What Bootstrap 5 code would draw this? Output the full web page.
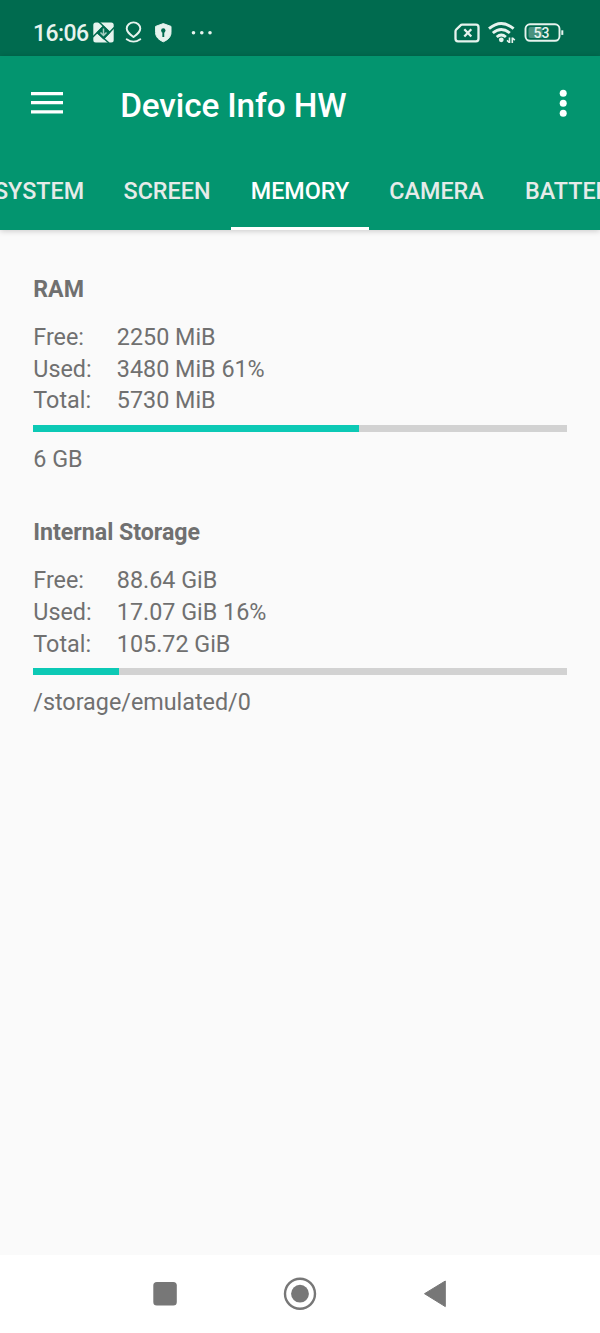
<!DOCTYPE html>
<html lang="en">
<head>
<meta charset="utf-8">
<meta name="viewport" content="width=device-width, initial-scale=1">
<title>Device Info HW</title>
<link href="https://cdn.jsdelivr.net/npm/bootstrap@5.3.0/dist/css/bootstrap.min.css" rel="stylesheet">
<style>
body { font-family: Roboto, sans-serif; font-size: 23.33px; line-height: 31.67px; background: #fafafa; color: #707070; height: 1333px; }
svg { display: block; flex: none; }
.status { background: #006b4f; height: 56px; padding: 9px 35px 0 33px; color: #e6f3ee; }
.clock { font-size: 23px; font-weight: 500; width: 60px; letter-spacing: -.55px; margin-top: 9px; }
.appbar { background: #03956f; height: 174px; box-shadow: 0 1px 6px rgba(0,0,0,.2); color: #fff; }
.toolbar-row { height: 94px; padding: 0 31px; }
.app-title { font-size: 33.33px; font-weight: 500; line-height: 40px; letter-spacing: -.12px; margin: 6px 0 0 57.2px; }
.tabs { height: 80px; }
.tabs .nav-link { height: 80px; padding: 26px 0 0; text-align: center; color: #e6ebe9; font-weight: 500; border-radius: 0; border-bottom: 3.5px solid transparent; flex: none; white-space: nowrap; }
.tabs .nav-link.active { color: #fff; border-color: #fff; }
.tab-system { width: 128px; margin-left: -25px; }
.tab-screen { width: 128px; }
.tab-memory { width: 138px; }
.tab-camera { width: 135px; }
.tab-battery { width: 141px; }
.content { padding: 43.7px 33.3px 0; }
.block { height: 243.4px; }
.block h2 { font-size: 23.2px; font-weight: 700; line-height: 31.67px; letter-spacing: -.03px; margin: 0 0 16.6px; }
.stat-label { width: 83.5px; }
.progress { height: 6.7px; border-radius: 0; background: #d2d2d2; margin: 8.1px 0 11.8px; }
.progress-bar { background: #0cc9b5; }
.navkeys { height: 78px; background: #fff; }
</style>
</head>
<body class="d-flex flex-column overflow-hidden">
<header class="status d-flex align-items-start flex-shrink-0">
  <div class="clock">16:06</div>
  <svg width="124" height="32" viewBox="93 17 124 32" style="margin-top:8px" fill="none">
    <rect x="93.3" y="22.5" width="20.4" height="20" rx="2.5" fill="#e6f3ee"/>
    <path d="M103.500 25.500l7 7-7 7-7-7z" fill="#006b4f"/>
    <path d="M98.500 21.500L110 32.500M114.200 27.500L103.500 38.700M109 43L97 32.500M92.800 37L103.500 26.300" stroke="#006b4f" stroke-width="1.600"/>
    <path d="M103.500 28.500v7m-3-3l3 3 3-3" stroke="#a6cfc2" stroke-width="1.500"/>
    <path d="M133.500 37c-4-3-6.800-5-6.800-8.400a6.800 6.200 0 0 1 13.600 0c0 3.400-2.800 5.400-6.800 8.400z" stroke="#e6f3ee" stroke-width="1.900" stroke-linejoin="round"/>
    <path d="M126.700 39.200q6.800 4.800 13.600 0" stroke="#e6f3ee" stroke-width="1.900" stroke-linecap="round"/>
    <path d="M163.300 23.600l7.700 2.800v6c0 4.500-2.900 7.200-7.700 9.400-4.800-2.200-7.700-4.900-7.700-9.400v-6z" fill="#e6f3ee" stroke="#e6f3ee" stroke-linejoin="round"/>
    <circle cx="163.300" cy="30.500" r="2.200" fill="#006b4f"/><path d="M163.300 31v6" stroke="#006b4f" stroke-width="1.900"/>
    <g fill="#e6f3ee"><circle cx="193.500" cy="32.700" r="1.800"/><circle cx="201.800" cy="32.700" r="1.800"/><circle cx="210" cy="32.700" r="1.800"/></g>
  </svg>
  <svg class="ms-auto" width="111" height="26" viewBox="454 20 111 26" style="margin-top:11px" fill="none" stroke="#e6f3ee">
    <path d="M462.200 24.700h13.800q2.500 0 2.500 2.500v11.600q0 2.500-2.500 2.500h-18q-2.500 0-2.500-2.500v-7.300q0-1.200.8-2l4-3.900q.8-.9 1.900-.9z" stroke-width="2.300"/>
    <path d="M464.300 29.300l7 7.200m0-7.200l-7 7.200" stroke-width="2.300"/>
    <path d="M489 28.700q12.300-10.400 24.600 0M492.800 33q8.500-7.200 17 0M496.700 37q4.600-3.800 9.200 0" stroke-width="2.900"/>
    <circle cx="501.300" cy="39.800" r="2.400" fill="#e6f3ee" stroke="none"/>
    <path d="M509.500 37.500v5.500M512.300 37.500v5.500" stroke-width="1.600"/><path d="M507 40.300l2.300 2M512.500 38.200l2.300 2" stroke-width="1.600"/>
    <rect x="525.500" y="24.300" width="34" height="16.500" rx="4.500" stroke-width="1.900"/>
    <rect x="528.500" y="27" width="14" height="11" rx="2" fill="#4a9280" stroke="none"/>
    <path d="M562.300 30.300v4.600" stroke-width="2"/>
    <text x="541.500" y="37.500" text-anchor="middle" font-family="Roboto, sans-serif" font-size="14" font-weight="500" fill="#e6f3ee" stroke="none">53</text>
  </svg>
</header>

<div class="appbar flex-shrink-0 position-relative">
  <div class="toolbar-row d-flex align-items-center">
    <svg width="32" height="24" viewBox="0 0 32 24"><path d="M0 2.600h32M0 11.700h32M0 20.800h32" stroke="#fff" stroke-width="3.200"/></svg>
    <h1 class="app-title">Device Info HW</h1>
    <svg class="ms-auto" width="12" height="30" viewBox="0 0 12 30" fill="#fff"><circle cx="6.200" cy="5.200" r="3.500"/><circle cx="6.200" cy="15.200" r="3.500"/><circle cx="6.200" cy="25.200" r="3.500"/></svg>
  </div>
  <nav class="tabs nav flex-nowrap overflow-hidden">
    <a class="nav-link tab-system">SYSTEM</a>
    <a class="nav-link tab-screen">SCREEN</a>
    <a class="nav-link tab-memory active">MEMORY</a>
    <a class="nav-link tab-camera">CAMERA</a>
    <a class="nav-link tab-battery">BATTERY</a>
  </nav>
</div>

<main class="content flex-grow-1">
  <section class="block">
    <h2>RAM</h2>
    <div class="d-flex"><div class="stat-label">Free:</div><div>2250 MiB</div></div>
    <div class="d-flex"><div class="stat-label">Used:</div><div>3480 MiB 61%</div></div>
    <div class="d-flex"><div class="stat-label">Total:</div><div>5730 MiB</div></div>
    <div class="progress"><div class="progress-bar" style="width:61%"></div></div>
    <div>6 GB</div>
  </section>
  <section class="block">
    <h2>Internal Storage</h2>
    <div class="d-flex"><div class="stat-label">Free:</div><div>88.64 GiB</div></div>
    <div class="d-flex"><div class="stat-label">Used:</div><div>17.07 GiB 16%</div></div>
    <div class="d-flex"><div class="stat-label">Total:</div><div>105.72 GiB</div></div>
    <div class="progress"><div class="progress-bar" style="width:16%"></div></div>
    <div>/storage/emulated/0</div>
  </section>
</main>

<footer class="navkeys d-flex justify-content-center align-items-center flex-shrink-0">
  <svg width="300" height="36" viewBox="150 1276 300 36" fill="#777">
    <rect x="153.300" y="1282" width="23.500" height="23.600" rx="3.500"/>
    <circle cx="300" cy="1293.700" r="15" fill="none" stroke="#777" stroke-width="2.400"/><circle cx="300" cy="1293.700" r="8.900"/>
    <path d="M424.500 1293.700L445.300 1281v25.600z" stroke="#777" stroke-linejoin="round"/>
  </svg>
</footer>
<script src="https://cdn.jsdelivr.net/npm/bootstrap@5.3.0/dist/js/bootstrap.bundle.min.js"></script>
</body>
</html>
